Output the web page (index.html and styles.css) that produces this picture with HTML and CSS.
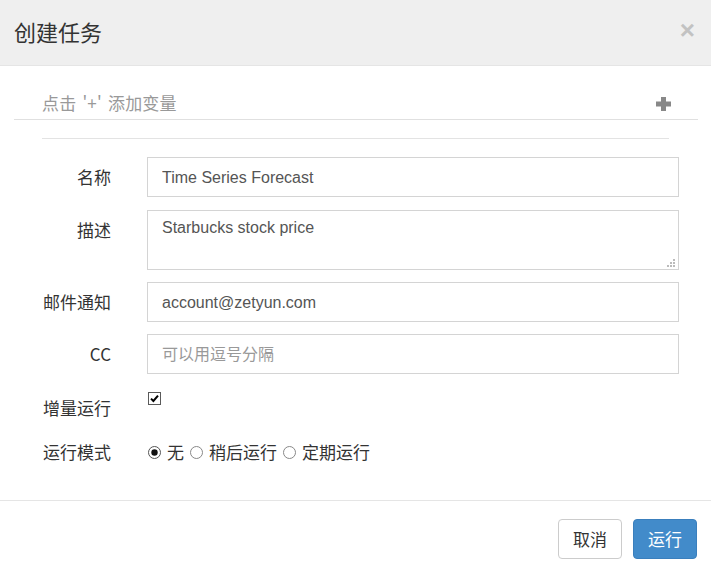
FILE: index.html
```html
<!DOCTYPE html>
<html lang="zh-CN">
<head>
<meta charset="utf-8">
<title>创建任务</title>
<link rel="stylesheet" href="styles.css">
</head>
<body>
<div class="modal">
  <div class="modal-header">
    <h4 class="modal-title">创建任务</h4>
    <span class="close">×</span>
  </div>
  <div class="modal-body">
    <div class="vars-row">
      <span class="vars-hint">点击 '+' 添加变量</span>
      <svg class="plus" width="15" height="14" viewBox="0 0 15 14"><rect x="0" y="4.5" width="15" height="5" fill="#888"/><rect x="5" y="0" width="5" height="14" fill="#888"/></svg>
    </div>
    <div class="divider"></div>
    <div class="form">
      <div class="form-row">
        <label class="form-label">名称</label>
        <input class="form-control" type="text" value="Time Series Forecast">
      </div>
      <div class="form-row mt13">
        <label class="form-label">描述</label>
        <div class="textarea-wrap">
          <textarea class="form-control textarea">Starbucks stock price</textarea>
          <svg class="grip" width="8" height="8" viewBox="0 0 8 8"><rect x="6" y="0" width="2" height="2" fill="#bbb"/><rect x="3" y="3" width="2" height="2" fill="#bbb"/><rect x="6" y="3" width="2" height="2" fill="#bbb"/><rect x="0" y="6" width="2" height="2" fill="#bbb"/><rect x="3" y="6" width="2" height="2" fill="#bbb"/><rect x="6" y="6" width="2" height="2" fill="#bbb"/></svg>
        </div>
      </div>
      <div class="form-row mt12">
        <label class="form-label">邮件通知</label>
        <input class="form-control" type="text" value="account@zetyun.com">
      </div>
      <div class="form-row mt12">
        <label class="form-label">CC</label>
        <input class="form-control" type="text" placeholder="可以用逗号分隔">
      </div>
      <div class="form-row mt14">
        <label class="form-label">增量运行</label>
        <div class="check-cell">
          <svg class="checkbox" width="13" height="13" viewBox="0 0 13 13"><rect x="0.5" y="0.5" width="12" height="12" fill="#fff" stroke="#5a5a5a"/><path d="M3 6.6 L5.4 9 L10 3.6" fill="none" stroke="#000" stroke-width="2"/></svg>
        </div>
      </div>
      <div class="form-row mt4">
        <label class="form-label">运行模式</label>
        <div class="radio-cell">
          <span class="radio-opt"><svg class="radio" width="13" height="13" viewBox="0 0 13 13"><circle cx="6.5" cy="6.5" r="6" fill="#fff" stroke="#555"/><circle cx="6.5" cy="6.5" r="3.2" fill="#111"/></svg>无</span>
          <span class="radio-opt"><svg class="radio" width="13" height="13" viewBox="0 0 13 13"><circle cx="6.5" cy="6.5" r="6" fill="#fff" stroke="#888"/></svg>稍后运行</span>
          <span class="radio-opt"><svg class="radio" width="13" height="13" viewBox="0 0 13 13"><circle cx="6.5" cy="6.5" r="6" fill="#fff" stroke="#888"/></svg>定期运行</span>
        </div>
      </div>
    </div>
  </div>
  <div class="modal-footer">
    <button class="btn btn-default">取消</button>
    <button class="btn btn-primary">运行</button>
  </div>
</div>
</body>
</html>
```
FILE: styles.css
```css
* { box-sizing: border-box; }
html, body { margin: 0; padding: 0; background: #fff; }
body {
  font-family: "Noto Sans CJK SC", "Liberation Sans", sans-serif;
  color: #333;
  width: 711px;
  height: 575px;
  overflow: hidden;
}
.modal { width: 711px; display: flex; flex-direction: column; }
.modal-header {
  height: 66px;
  background: #efefef;
  border-bottom: 1px solid #e5e5e5;
  display: flex;
  align-items: center;
  justify-content: space-between;
  padding: 0 16px 4px 14px;
}
.modal-title {
  margin: 0;
  font-size: 22px;
  font-weight: normal;
  line-height: 30px;
  color: #333;
}
.close {
  font-family: "Liberation Sans", sans-serif;
  font-size: 26px;
  font-weight: bold;
  line-height: 26px;
  color: #c2c2c2;
  margin-top: -2px;
}
.modal-body { padding: 0 0 28px 0; height: 434px; }
.vars-row {
  margin: 0 13px 0 14px;
  padding: 25px 27px 4px 28px;
  border-bottom: 1px solid #e0e0e0;
  display: flex;
  align-items: center;
  justify-content: space-between;
}
.vars-hint {
  font-size: 17px;
  line-height: 24px;
  color: #999;
  word-spacing: 2px;
  letter-spacing: 0.2px;
}
.plus { display: block; margin-top: 1px; }
.divider {
  margin: 18px 42px 0 42px;
  height: 1px;
  background: #e3e3e3;
}
.form {
  margin: 18px 0 0 14px;
  display: flex;
  flex-direction: column;
}
.form-row {
  display: grid;
  grid-template-columns: 97px 532px;
  column-gap: 36px;
  align-items: start;
}
.mt4 { margin-top: 4px; }
.mt12 { margin-top: 12px; }
.mt13 { margin-top: 13px; }
.mt14 { margin-top: 14px; }
.form-label {
  font-size: 17px;
  line-height: 40px;
  text-align: right;
  color: #333;
}
.form-control {
  display: block;
  width: 532px;
  height: 40px;
  margin: 0;
  padding: 1px 14px 0 14px;
  border: 1px solid #d4d4d4;
  border-radius: 0;
  background: #fff;
  font-family: "Liberation Sans", "Noto Sans CJK SC", sans-serif;
  font-size: 16px;
  color: #555;
  outline: none;
}
.form-control::placeholder {
  color: #999;
  font-family: "Noto Sans CJK SC", sans-serif;
}
.textarea-wrap { position: relative; width: 532px; height: 60px; }
.textarea {
  height: 60px;
  padding: 7px 14px;
  line-height: 20px;
  resize: none;
  overflow: hidden;
}
.grip { position: absolute; right: 4px; bottom: 3px; display: block; }
.check-cell { height: 40px; padding-top: 4px; padding-left: 1px; }
.checkbox { display: block; }
.radio-cell {
  height: 40px;
  display: flex;
  align-items: center;
  gap: 6px;
  padding-left: 1px;
}
.radio-opt {
  display: inline-flex;
  align-items: center;
  gap: 6px;
  font-size: 17px;
  line-height: 24px;
  color: #333;
}
.radio { display: block; }
.modal-footer {
  border-top: 1px solid #e5e5e5;
  padding: 18px 14px 16px 14px;
  display: flex;
  justify-content: flex-end;
  gap: 11px;
}
.btn {
  height: 40px;
  padding: 0 14px;
  border: 1px solid #ccc;
  border-radius: 4px;
  font-family: "Noto Sans CJK SC", sans-serif;
  font-size: 17px;
  line-height: 38px;
  cursor: pointer;
}
.btn-default { background: #fff; color: #333; border-color: #ccc; }
.btn-primary { background: #428bca; color: #fff; border-color: #3a7fbd; }
```
